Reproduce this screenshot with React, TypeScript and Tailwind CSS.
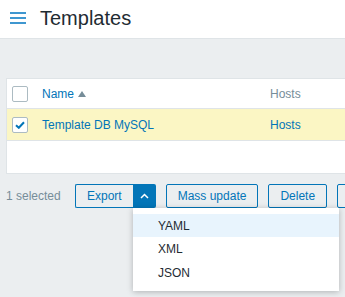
import React from "react"

const Checkbox = ({ checked }: { checked?: boolean }) => (
    <span className="flex h-4 w-4 items-center justify-center rounded-[2px] border border-[#acbbc2] bg-white">
        {checked && (
            <svg width="10" height="8" viewBox="0 0 10 8">
                <path d="M1 4.2 L3.8 6.8 L9 1.2" fill="none" stroke="#0275b8" strokeWidth="2" />
            </svg>
        )}
    </span>
)

const OutlineButton = ({ children }: { children: React.ReactNode }) => (
    <button className="h-6 shrink-0 whitespace-nowrap rounded-[2px] border border-[#0275b8] px-[11px] text-[12px] leading-none text-[#0275b8]">
        {children}
    </button>
)

export default function App() {
    return (
        <div className="h-[297px] w-[345px] overflow-hidden bg-[#ebeef0] font-['Liberation_Sans',Arial,sans-serif]">
            <div className="flex h-[39px] items-center border-b border-[#dfe4e7] bg-white">
                <div className="ml-[10px] flex w-4 flex-col gap-[3px] pb-[3px]">
                    <span className="h-[2px] w-4 bg-[#3f97d0]" />
                    <span className="h-[2px] w-4 bg-[#3f97d0]" />
                    <span className="h-[2px] w-4 bg-[#3f97d0]" />
                </div>
                <h1 className="ml-[14px] pb-[3px] text-[20px] leading-none text-[#1f2c33]">Templates</h1>
            </div>

            <div className="ml-[6px] mt-[39px] w-[420px] border border-[#dfe4e7] bg-white text-[12px]">
                <div className="flex h-[30px] items-center border-b border-[#dfe4e7]">
                    <div className="w-[35px] pl-[5px]"><Checkbox /></div>
                    <div className="flex w-[228px] items-center gap-[4px] text-[#0275b8]">
                        Name
                        <svg width="8" height="6" viewBox="0 0 8 6"><path d="M0 6 L4 0 L8 6 Z" fill="#768d99" /></svg>
                    </div>
                    <div className="text-[#768d99]">Hosts</div>
                </div>
                <div className="flex h-[32px] items-center border-b border-[#dfe4e7] bg-[#fbf6c4]">
                    <div className="w-[35px] pl-[5px]"><Checkbox checked /></div>
                    <div className="w-[228px] text-[#0275b8]">Template DB MySQL</div>
                    <div className="text-[#0275b8]">Hosts</div>
                </div>
                <div className="h-[32px]" />
            </div>

            <div className="relative ml-[6px] mt-[10px] flex w-max items-center text-[12px]">
                <span className="w-[69px] shrink-0 whitespace-nowrap text-[#768d99]">1 selected</span>
                <div className="relative flex shrink-0">
                    <button className="h-6 whitespace-nowrap rounded-l-[2px] border border-r-0 border-[#0275b8] px-[11px] text-[12px] leading-none text-[#0275b8]">Export</button>
                    <button className="flex h-6 w-[23px] items-center justify-center rounded-r-[2px] bg-[#0275b8]">
                        <svg width="9" height="6" viewBox="0 0 9 6"><path d="M1 5 L4.5 1.5 L8 5" fill="none" stroke="white" strokeWidth="1.5" /></svg>
                    </button>
                    <div className="absolute left-[58px] top-6 z-10 w-[206px] bg-white py-[6px] shadow-[0_1px_6px_rgba(0,0,0,0.25)]">
                        <div className="flex h-[23px] items-center bg-[#e8f4fd] pl-[25px] text-[#1f2c33]">YAML</div>
                        <div className="flex h-[24px] items-center pl-[25px] text-[#1f2c33]">XML</div>
                        <div className="flex h-[24px] items-center pl-[25px] text-[#1f2c33]">JSON</div>
                    </div>
                </div>
                <div className="ml-[10px] flex gap-[10px]">
                    <OutlineButton>Mass update</OutlineButton>
                    <OutlineButton>Delete</OutlineButton>
                    <OutlineButton>Delete and clear</OutlineButton>
                </div>
            </div>
        </div>
    )
}
